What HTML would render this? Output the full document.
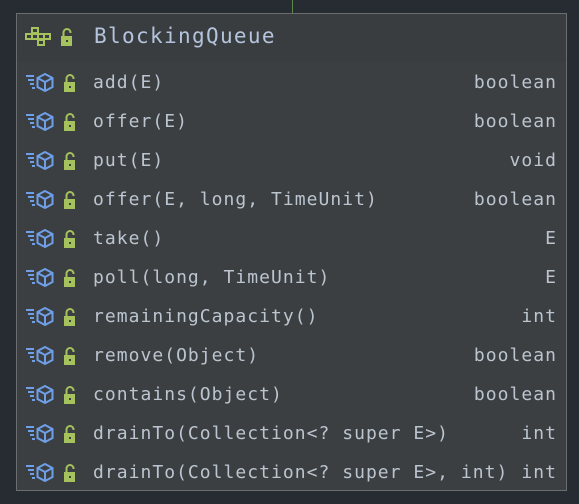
<!DOCTYPE html>
<html><head><style>
body{margin:0;width:579px;height:504px;background:#262c32;position:relative;overflow:hidden;font-family:"DejaVu Sans Mono","Liberation Mono",monospace;}
.vl{position:absolute;left:292px;top:0;width:1px;height:14px;background:#5a8a4a;}
.box{position:absolute;left:16px;top:13px;width:549px;height:476px;border:1px solid #6b6e70;background:#3c3f41;}
.hdr{position:absolute;left:0;top:0;width:549px;height:48px;background:#3a3d3f;}
.title{position:absolute;left:77px;top:10px;font-size:21px;letter-spacing:1.35px;color:#b4c4dc;}
.row{position:absolute;left:0;width:549px;height:39px;}
.nm{position:absolute;left:76px;top:9px;font-size:18px;letter-spacing:1.03px;color:#bbc5d0;white-space:pre;}
.ty{position:absolute;right:9px;top:9px;font-size:18px;letter-spacing:1.03px;color:#bbc5d0;white-space:pre;}
.ic{position:absolute;left:8px;top:9px;}
</style></head><body>
<div class="vl"></div>
<div class="box">
<div class="hdr">
<svg style="position:absolute;left:7px;top:12px" width="48" height="22" viewBox="0 0 48 22">
<g fill="none" stroke="#a5c25c" stroke-width="2">
<rect x="8" y="2" width="6" height="5"/><rect x="2" y="8" width="6" height="5"/><rect x="8" y="8" width="6" height="5"/><rect x="14" y="8" width="6" height="5"/><rect x="20" y="8" width="6" height="5"/><rect x="14" y="14" width="6" height="5"/>
</g>
<rect x="37" y="10" width="12" height="10" fill="#a5c25c"/><path d="M39.5 10V6.5a3.5 3.5 0 0 1 7 0V7" stroke="#a5c25c" stroke-width="2" fill="none"/><rect x="42" y="14" width="2" height="2" fill="#3a3d3f"/>
</svg>
<div class="title">BlockingQueue</div>
</div>
<div id="rows"></div>
</div>
<script>
var d=[["add(E)","boolean"],["offer(E)","boolean"],["put(E)","void"],["offer(E, long, TimeUnit)","boolean"],["take()","E"],["poll(long, TimeUnit)","E"],["remainingCapacity()","int"],["remove(Object)","boolean"],["contains(Object)","boolean"],["drainTo(Collection<? super E>)","int"],["drainTo(Collection<? super E>, int)","int"]];
var h="";
var ic='<svg class="ic" width="50" height="22" viewBox="0 0 50 22"><g stroke="#6f9fe8" stroke-width="2" fill="none"><path d="M1 4h8M3 8h6M5 12h4M7 16h3"/><path d="M20 2l7.5 4v9l-7.5 4-7.5-4V6z"/><path d="M12.5 6l7.5 4 7.5-4M20 10v9"/></g><rect x="39" y="10" width="12" height="10" fill="#a5c25c"/><path d="M41.5 10V6.5a3.5 3.5 0 0 1 7 0V7" stroke="#a5c25c" stroke-width="2" fill="none"/><rect x="44" y="14" width="2" height="2" fill="#3c3f41"/></svg>';
for(var i=0;i<d.length;i++){h+='<div class="row" style="top:'+(49+i*39)+'px">'+ic+'<div class="nm"></div><div class="ty"></div></div>';}
document.getElementById("rows").innerHTML=h;
var r=document.querySelectorAll(".row");
for(var i=0;i<d.length;i++){r[i].querySelector(".nm").textContent=d[i][0];r[i].querySelector(".ty").textContent=d[i][1];}
</script>
</body></html>
